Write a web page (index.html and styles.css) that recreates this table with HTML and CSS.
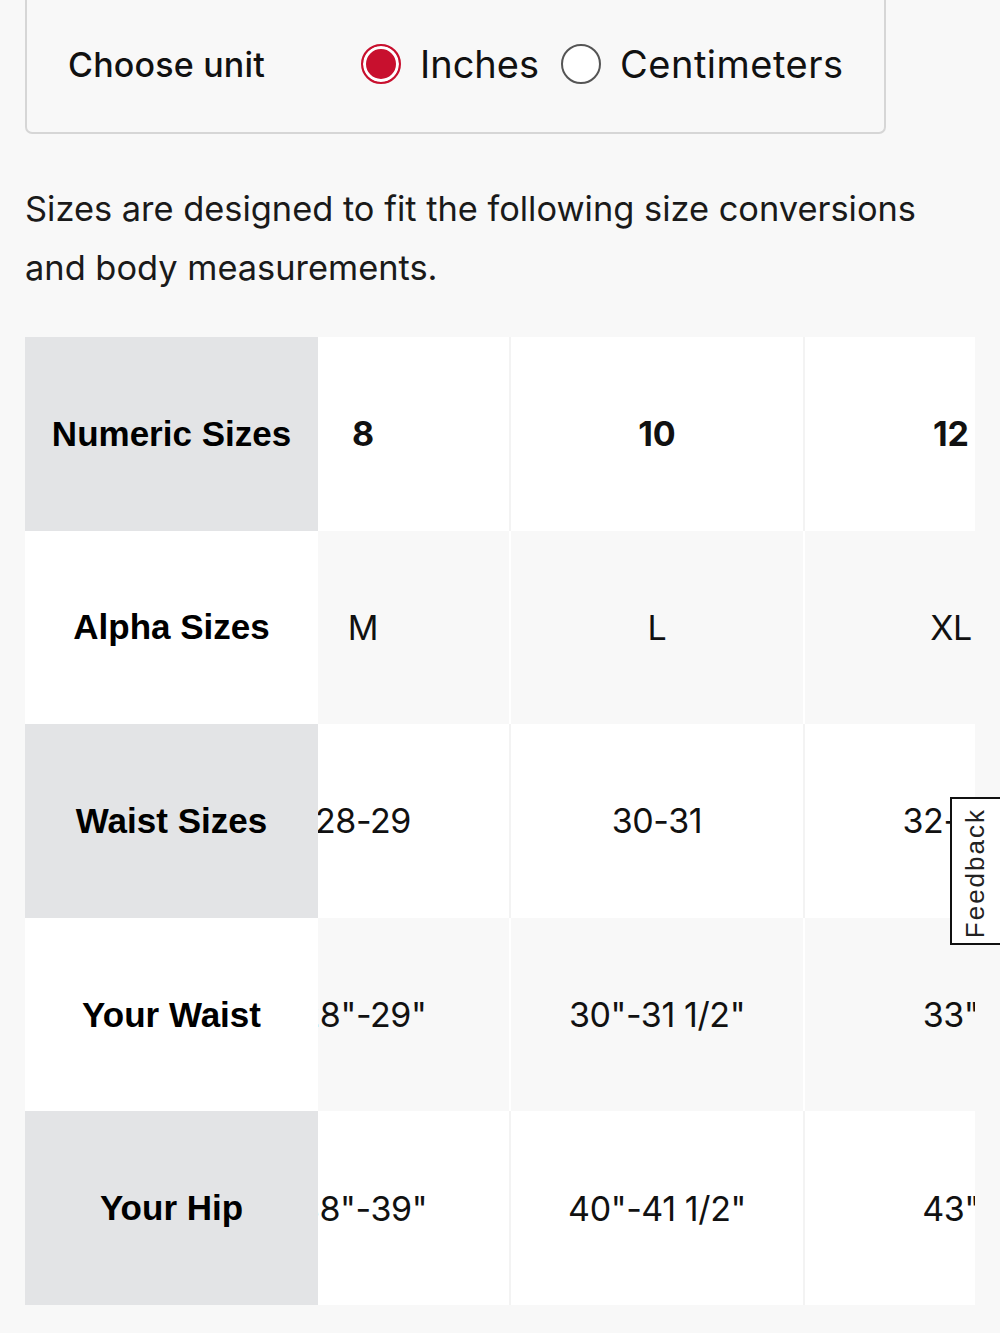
FILE: index.html
```html
<!DOCTYPE html>
<html lang="en">
<head>
<meta charset="utf-8">
<title>Size chart</title>
<link rel="stylesheet" href="styles.css">
</head>
<body>
<div class="page">
  <div class="unit-box">
    <span class="unit-label">Choose unit</span>
    <div class="radios">
      <label class="radio"><span class="dot checked"></span><span>Inches</span></label>
      <label class="radio"><span class="dot"></span><span class="cm">Centimeters</span></label>
    </div>
  </div>

  <p class="intro">Sizes are designed to fit the following size conversions and body measurements.</p>

  <div class="size-table">
    <div class="head-col">
      <div class="hcell shade">Numeric Sizes</div>
      <div class="hcell">Alpha Sizes</div>
      <div class="hcell shade">Waist Sizes</div>
      <div class="hcell">Your Waist</div>
      <div class="hcell shade">Your Hip</div>
    </div>
    <div class="viewport">
      <div class="rows">
        <div class="row light strong"><div class="cell">8</div><div class="cell">10</div><div class="cell">12</div></div>
        <div class="row tint"><div class="cell">M</div><div class="cell">L</div><div class="cell">XL</div></div>
        <div class="row light"><div class="cell">28-29</div><div class="cell">30-31</div><div class="cell">32-33</div></div>
        <div class="row tint"><div class="cell">28"-29"</div><div class="cell">30"-31 1/2"</div><div class="cell">33"</div></div>
        <div class="row light"><div class="cell">38"-39"</div><div class="cell">40"-41 1/2"</div><div class="cell">43"</div></div>
      </div>
    </div>
  </div>
</div>
<div class="feedback"><span class="feedback-text">Feedback</span></div>
</body>
</html>
```

FILE: styles.css
```css
html, body {
  margin: 0;
  padding: 0;
  background: #f8f8f8;
}
body {
  font-family: Inter, "Liberation Sans", Arial, sans-serif;
  color: #111;
  overflow: hidden;
}
.page {
  padding: 0 25px;
}
.unit-box {
  width: 861px;
  height: 140px;
  margin-top: -6px;
  box-sizing: border-box;
  border: 2px solid #d6d6d6;
  border-radius: 0 0 7px 7px;
  display: flex;
  align-items: center;
  padding-left: 41px;
}
.unit-label {
  font-size: 34px;
  font-weight: 500;
  width: 293px;
  color: #111;
  letter-spacing: 0.2px;
}
.radios {
  display: flex;
  align-items: center;
  gap: 22px;
}
.radio {
  display: flex;
  align-items: center;
  gap: 19px;
  font-size: 38px;
  color: #111;
}
.cm {
  letter-spacing: 0.5px;
}
.dot {
  width: 40px;
  height: 40px;
  box-sizing: border-box;
  border-radius: 50%;
  border: 2px solid #555;
  background: #fff;
}
.dot.checked {
  border-color: #c8102e;
  background: #c8102e;
  box-shadow: inset 0 0 0 3px #fff;
}
.intro {
  margin: 45px 0 40px;
  font-size: 34.4px;
  line-height: 59px;
  color: #1a1a1a;
}
.size-table {
  display: flex;
  width: 950px;
}
.head-col {
  width: 293px;
  flex: none;
  display: flex;
  flex-direction: column;
}
.hcell {
  height: 193.6px;
  display: flex;
  align-items: center;
  justify-content: center;
  font-family: "Liberation Sans", Arial, sans-serif;
  font-weight: 700;
  font-size: 35px;
  background: #fff;
  color: #000;
}
.hcell.shade {
  background: #e3e4e6;
}
.viewport {
  flex: 1;
  overflow: hidden;
}
.rows {
  margin-left: -101px;
  display: flex;
  flex-direction: column;
}
.row {
  height: 193.6px;
  display: grid;
  grid-template-columns: repeat(3, 292px);
  column-gap: 2px;
}
.row.light { background: #f3f3f3; }
.row.light .cell { background: #fff; }
.row.tint { background: #ffffff; }
.row.tint .cell { background: #f8f8f8; }
.cell {
  display: flex;
  align-items: center;
  justify-content: center;
  font-size: 34px;
  color: #111;
  letter-spacing: -0.4px;
}
.row.strong .cell {
  font-weight: 700;
  letter-spacing: 0;
}
.feedback {
  position: fixed;
  left: 950px;
  top: 797px;
  width: 60px;
  height: 148px;
  box-sizing: border-box;
  border: 2px solid #111;
  background: #fff;
  display: flex;
  align-items: center;
  padding-left: 8px;
  padding-top: 4px;
}
.feedback-text {
  writing-mode: vertical-rl;
  transform: rotate(180deg);
  font-family: "Liberation Sans", Arial, sans-serif;
  font-size: 26px;
  letter-spacing: 2px;
  color: #222;
}
```
